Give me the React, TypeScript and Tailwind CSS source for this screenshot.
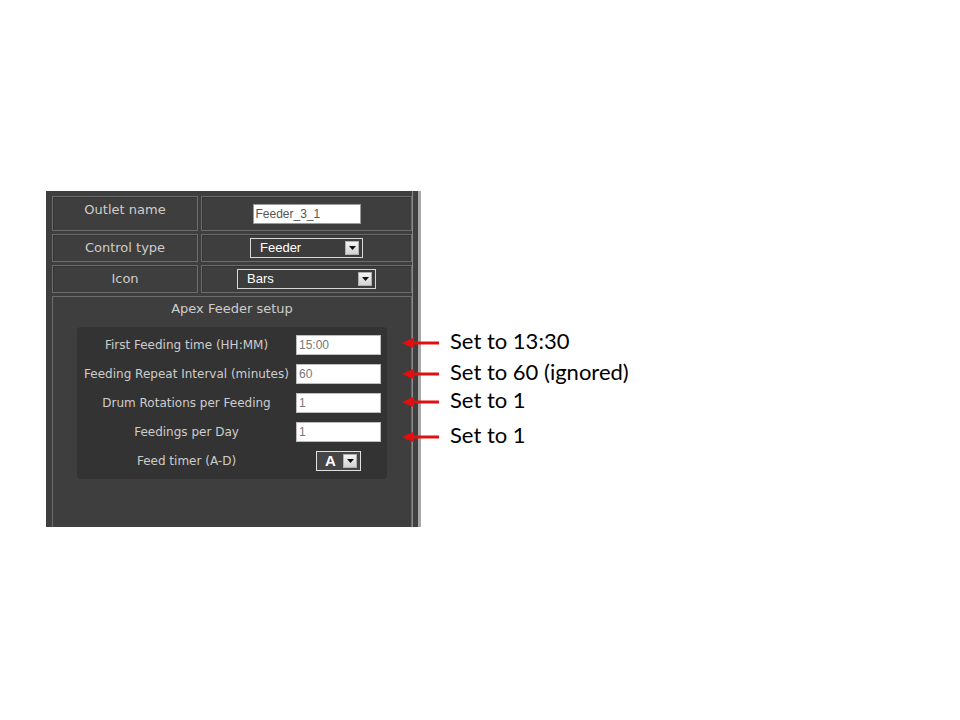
import type { ReactNode } from "react";

const labelFont = { fontFamily: '"DejaVu Sans", Verdana, sans-serif' };
const fieldFont = { fontFamily: '"Liberation Sans", Arial, sans-serif' };

function ArrowBox() {
  return (
    <span className="flex h-[14px] w-[14px] items-center justify-center bg-gradient-to-b from-[#f4f4f4] to-[#d2d2d2] border border-[#b0b0b0]">
      <svg width="7" height="4" viewBox="0 0 7 4">
        <path d="M0 0h7L3.5 4z" fill="#111" />
      </svg>
    </span>
  );
}

function Select({ value, className }: { value: string; className: string }) {
  return (
    <div
      className={`flex h-[20px] items-center justify-between border border-[#d8d8d8] bg-[#3c3c3c] pl-[9px] pr-[3px] text-[13px] text-white ${className}`}
      style={fieldFont}
    >
      <span>{value}</span>
      <ArrowBox />
    </div>
  );
}

function Cell({ children, className = "" }: { children: ReactNode; className?: string }) {
  return (
    <div className={`border border-[#6c6c6c] shadow-[inset_1px_1px_0_#333] ${className}`}>{children}</div>
  );
}

const feederRows = [
  { label: "First Feeding time (HH:MM)", value: "15:00" },
  { label: "Feeding Repeat Interval (minutes)", value: "60" },
  { label: "Drum Rotations per Feeding", value: "1" },
  { label: "Feedings per Day", value: "1" },
];

const notes = [
  { text: "Set to 13:30", y: 343 },
  { text: "Set to 60 (ignored)", y: 374 },
  { text: "Set to 1", y: 402 },
  { text: "Set to 1", y: 437 },
];

function RedArrow() {
  return (
    <svg width="40" height="14" viewBox="0 0 40 14">
      <path d="M12 7H38" stroke="#e01010" strokeWidth="3" />
      <path d="M1 7L13 1.5V12.5z" fill="#e01010" />
    </svg>
  );
}

export default function App() {
  return (
    <div className="relative h-[720px] w-[960px] overflow-hidden bg-white">
      <div className="ml-[46px] mt-[191px] flex h-[336px] w-[375px]">
        {/* outlet settings panel */}
        <div className="flex w-[367px] flex-col gap-[3px] border-r border-[#8a8a8a] bg-[#3e3e3e] pl-[6px] pt-[5px] text-[#cdcdcd]" style={labelFont}>
          <div className="flex h-[35px] gap-[3px]">
            <Cell className="flex w-[146px] justify-center pt-[3px] text-[13px]">Outlet name</Cell>
            <Cell className="flex flex-1 items-center justify-center">
              <div
                className="flex h-[20px] w-[108px] items-center border border-[#9a9a9a] bg-white pl-[2px] text-[12px] text-[#555]"
                style={fieldFont}
              >
                Feeder_3_1
              </div>
            </Cell>
          </div>
          <div className="flex h-[28px] gap-[3px]">
            <Cell className="flex w-[146px] items-center justify-center text-[13px]">Control type</Cell>
            <Cell className="flex flex-1 items-center justify-center">
              <Select value="Feeder" className="w-[113px]" />
            </Cell>
          </div>
          <div className="flex h-[28px] gap-[3px]">
            <Cell className="flex w-[146px] items-center justify-center text-[13px]">Icon</Cell>
            <Cell className="flex flex-1 items-center justify-center">
              <Select value="Bars" className="w-[139px]" />
            </Cell>
          </div>
          <div className="flex flex-1 flex-col items-center border-x border-t border-[#6c6c6c]">
            <div className="pt-[3px] text-[13px] leading-[18px]">Apex Feeder setup</div>
            <div className="mt-[9px] flex w-[310px] flex-col gap-[9px] rounded-[4px] bg-[#333333] pb-[8px] pl-[4px] pr-[6px] pt-[8px] text-[12px]">
              {feederRows.map((r) => (
                <div key={r.label} className="flex h-[20px] items-center">
                  <span className="flex-1 whitespace-nowrap text-center">{r.label}</span>
                  <div
                    className="ml-[4px] flex h-[20px] w-[85px] items-center border border-[#bdbdbd] bg-white pl-[2px] text-[12px] text-[#777]"
                    style={fieldFont}
                  >
                    {r.value}
                  </div>
                </div>
              ))}
              <div className="flex h-[20px] items-center">
                <span className="flex-1 text-center">Feed timer (A-D)</span>
                <div className="ml-[4px] flex w-[85px] justify-center">
                  <div
                    className="flex h-[20px] w-[45px] items-center justify-between border border-[#e0e0e0] bg-[#454545] pl-[8px] pr-[3px] text-[15px] font-bold text-white"
                    style={fieldFont}
                  >
                    <span>A</span>
                    <ArrowBox />
                  </div>
                </div>
              </div>
            </div>
          </div>
        </div>
        {/* scroll edge */}
        <div className="w-[5px] bg-[#404040]" />
        <div className="w-[3px] bg-[#a8a8a8]" />
      </div>

      {notes.map((n, i) => (
        <div
          key={i}
          className="absolute left-[401px] flex items-center gap-[9px] text-[22px] leading-none text-black"
          style={{ top: n.y - 9, fontFamily: 'Lato, "Open Sans", sans-serif' }}
        >
          <RedArrow />
          <span className="-mt-[4px]">{n.text}</span>
        </div>
      ))}
    </div>
  );
}
